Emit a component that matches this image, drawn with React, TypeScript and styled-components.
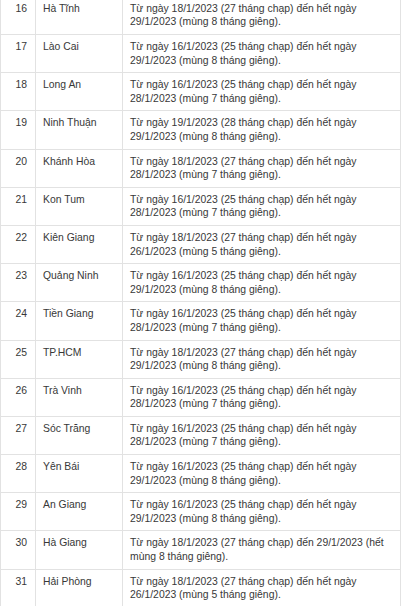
import React from 'react';
import styled, { createGlobalStyle } from 'styled-components';

const GlobalStyle = createGlobalStyle`
	html, body {
		margin: 0;
		padding: 0;
		background: #ffffff;
	}
	body {
		font-family: Arial, "Liberation Sans", sans-serif;
		overflow: hidden;
	}
`;

const Page = styled.div`
	width: 401px;
	height: 606px;
	overflow: hidden;
`;

const Table = styled.table`
	width: 401px;
	margin-top: -4.2px;
	border-collapse: collapse;
	table-layout: fixed;
	font-size: 10.4px;
	line-height: 13.6px;
	color: #383838;
`;

const Row = styled.tr`
	border-top: 1px solid #e2e2e2;
	border-bottom: 1px solid #e2e2e2;
`;

const Cell = styled.td<{ $align?: 'left' | 'right' }>`
	vertical-align: top;
	padding: 5px 7px;
	border-left: 1px solid #e2e2e2;
	border-right: 1px solid #e2e2e2;
	text-align: ${(p) => p.$align ?? 'left'};
`;

const NumCell = styled(Cell)`
	padding-right: 8px;
`;

const TextCell = styled(Cell)`
	padding-right: 14px;
`;

type Entry = { no: number; name: string; text: string };

const from = (d: string, c: string) => `Từ ngày ${d}/1/2023 (${c} tháng chạp) đến hết ngày`;
const to = (d: string, m: string) => `${d}/1/2023 (mùng ${m} tháng giêng).`;

const rows: Entry[] = [
	{ no: 16, name: 'Hà Tĩnh', text: `${from('18', '27')} ${to('29', '8')}` },
	{ no: 17, name: 'Lào Cai', text: `${from('16', '25')} ${to('29', '8')}` },
	{ no: 18, name: 'Long An', text: `${from('16', '25')} ${to('28', '7')}` },
	{ no: 19, name: 'Ninh Thuận', text: `${from('19', '28')} ${to('29', '8')}` },
	{ no: 20, name: 'Khánh Hòa', text: `${from('18', '27')} ${to('28', '7')}` },
	{ no: 21, name: 'Kon Tum', text: `${from('16', '25')} ${to('28', '7')}` },
	{ no: 22, name: 'Kiên Giang', text: `${from('18', '27')} ${to('26', '5')}` },
	{ no: 23, name: 'Quảng Ninh', text: `${from('16', '25')} ${to('29', '8')}` },
	{ no: 24, name: 'Tiền Giang', text: `${from('16', '25')} ${to('28', '7')}` },
	{ no: 25, name: 'TP.HCM', text: `${from('18', '27')} ${to('29', '8')}` },
	{ no: 26, name: 'Trà Vinh', text: `${from('16', '25')} ${to('28', '7')}` },
	{ no: 27, name: 'Sóc Trăng', text: `${from('16', '25')} ${to('28', '7')}` },
	{ no: 28, name: 'Yên Bái', text: `${from('16', '25')} ${to('29', '8')}` },
	{ no: 29, name: 'An Giang', text: `${from('16', '25')} ${to('29', '8')}` },
	{
		no: 30,
		name: 'Hà Giang',
		text: 'Từ ngày 18/1/2023 (27 tháng chạp) đến 29/1/2023 (hết mùng 8 tháng giêng).',
	},
	{ no: 31, name: 'Hải Phòng', text: `${from('18', '27')} ${to('26', '5')}` },
];

export default function App() {
	return (
		<Page>
			<GlobalStyle />
			<Table>
				<colgroup>
					<col style={{ width: 35 }} />
					<col style={{ width: 87 }} />
					<col />
				</colgroup>
				<tbody>
					{rows.map((r) => (
						<Row key={r.no}>
							<NumCell $align="right">{r.no}</NumCell>
							<Cell>{r.name}</Cell>
							<TextCell>{r.text}</TextCell>
						</Row>
					))}
				</tbody>
			</Table>
		</Page>
	);
}
